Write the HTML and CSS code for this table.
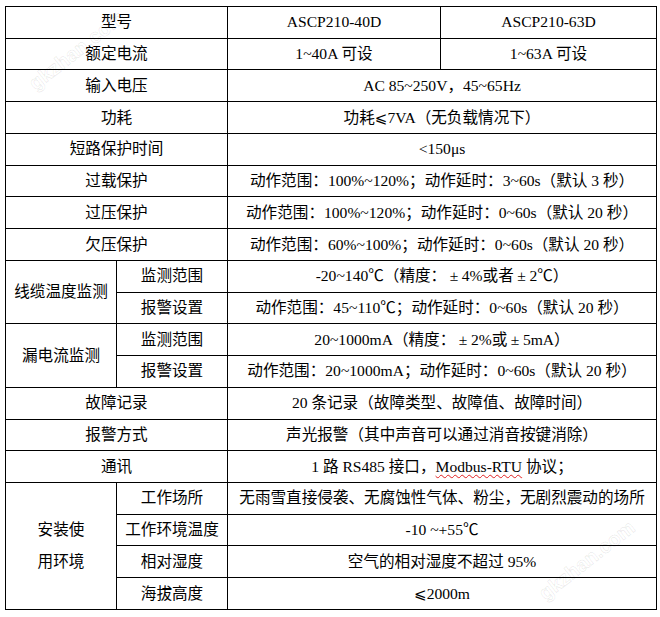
FILE: index.html
```html
<!DOCTYPE html>
<html lang="zh">
<head>
<meta charset="utf-8">
<link rel="stylesheet" href="styles.css">
</head>
<body>
<table class="spec">
<colgroup><col class="c1"><col class="c2"><col class="c3"><col class="c4"></colgroup>
<tr><td colspan="2">型号</td><td>ASCP210-40D</td><td>ASCP210-63D</td></tr>
<tr><td colspan="2">额定电流</td><td>1~40A 可设</td><td>1~63A 可设</td></tr>
<tr><td colspan="2">输入电压</td><td colspan="2">AC 85~250V，45~65Hz</td></tr>
<tr><td colspan="2">功耗</td><td colspan="2">功耗<span class="le">⩽</span>7VA（无负载情况下）</td></tr>
<tr><td colspan="2">短路保护时间</td><td colspan="2">&lt;150μs</td></tr>
<tr><td colspan="2">过载保护</td><td colspan="2">动作范围：100%~120%；动作延时：3~60s（默认 3 秒）</td></tr>
<tr><td colspan="2">过压保护</td><td colspan="2">动作范围：100%~120%；动作延时：0~60s（默认 20 秒）</td></tr>
<tr><td colspan="2">欠压保护</td><td colspan="2">动作范围：60%~100%；动作延时：0~60s（默认 20 秒）</td></tr>
<tr><td rowspan="2">线缆温度监测</td><td>监测范围</td><td colspan="2">-20~140℃（精度：<span class="pm">±</span>4%或者<span class="pm">±</span>2℃）</td></tr>
<tr><td>报警设置</td><td colspan="2">动作范围：45~110℃；动作延时：0~60s（默认 20 秒）</td></tr>
<tr><td rowspan="2">漏电流监测</td><td>监测范围</td><td colspan="2">20~1000mA（精度：<span class="pm">±</span>2%或<span class="pm">±</span>5mA）</td></tr>
<tr><td>报警设置</td><td colspan="2">动作范围：20~1000mA；动作延时：0~60s（默认 20 秒）</td></tr>
<tr><td colspan="2">故障记录</td><td colspan="2">20 条记录（故障类型、故障值、故障时间）</td></tr>
<tr><td colspan="2">报警方式</td><td colspan="2">声光报警（其中声音可以通过消音按键消除）</td></tr>
<tr><td colspan="2">通讯</td><td colspan="2">1 路 RS485 接口，<span class="spell">Modbus-RTU</span> 协议；</td></tr>
<tr><td rowspan="4" class="env">安装使<br>用环境</td><td>工作场所</td><td colspan="2">无雨雪直接侵袭、无腐蚀性气体、粉尘，无剧烈震动的场所</td></tr>
<tr><td>工作环境温度</td><td colspan="2">-10 ~+55℃</td></tr>
<tr><td>相对湿度</td><td colspan="2">空气的相对湿度不超过 95%</td></tr>
<tr><td>海拔高度</td><td colspan="2"><span class="le">⩽</span>2000m</td></tr>
</table>
<div class="wm wm1">gkzhan.com</div>
<div class="wm wm2">gkzhan.com</div>
</body>
</html>
```
FILE: styles.css
```css
html, body {
  margin: 0;
  padding: 0;
  background: #ffffff;
}
body {
  padding: 6px 0 0 5px;
  position: relative;
  overflow: hidden;
  height: 611px;
}
.spec {
  border-collapse: collapse;
  table-layout: fixed;
  width: 651px;
  font-family: "Liberation Serif", "Noto Sans CJK SC", serif;
  font-size: 15.6px;
  color: #000;
}
.c1 { width: 111px; }
.c2 { width: 111px; }
.c3 { width: 213px; }
.c4 { width: 216px; }
.spec td {
  border: 1px solid #000;
  height: 30.74px;
  padding: 0;
  text-align: center;
  vertical-align: middle;
  line-height: 20px;
  white-space: nowrap;
  overflow: hidden;
}
.spec td.env {
  line-height: 32px;
}
.le {
  font-family: "DejaVu Sans", sans-serif;
  font-size: 15px;
}
.pm {
  display: inline-block;
  width: 1em;
  text-align: center;
}
.spell {
  text-decoration: underline wavy #e02020;
  text-decoration-thickness: 1px;
  text-underline-offset: 2px;
}
.wm {
  position: absolute;
  font-family: "Liberation Sans", sans-serif;
  font-size: 20px;
  font-weight: bold;
  line-height: 30px;
  color: transparent;
  -webkit-text-stroke: 1px rgba(0, 0, 0, 0.07);
  transform: rotate(-38deg);
  pointer-events: none;
  white-space: nowrap;
}
.wm1 { left: 19px; top: 35px; }
.wm2 { left: 529px; top: 545px; }
```
